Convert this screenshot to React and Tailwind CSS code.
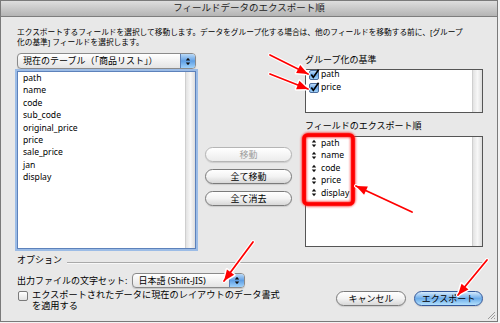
import React from 'react';

const LEFT_FIELDS = ['path', 'name', 'code', 'sub_code', 'original_price', 'price', 'sale_price', 'jan', 'display'];
const GROUP_FIELDS = ['path', 'price'];
const EXPORT_FIELDS = ['path', 'name', 'code', 'price', 'display'];

// 注釈の矢印（尾 → 先端）
const ARROWS = [
  [270, 55, 308, 74],
  [270, 74, 308, 89],
  [412, 212, 356, 186],
  [253, 242, 224, 281],
  [487, 260, 458, 295],
];

function headPoints(x1, y1, x2, y2, len = 11, half = 4.5) {
  const dx = x2 - x1;
  const dy = y2 - y1;
  const d = Math.hypot(dx, dy);
  const ux = dx / d;
  const uy = dy / d;
  const bx = x2 - ux * len;
  const by = y2 - uy * len;
  return `${x2},${y2} ${bx - uy * half},${by + ux * half} ${bx + uy * half},${by - ux * half}`;
}

function Updown({ className }) {
  return (
    <svg width="6" height="9" viewBox="0 0 6 9" className={className}>
      <polygon points="0.8,3.5 3,0.8 5.2,3.5" fill="#111" />
      <polygon points="0.8,5.5 3,8.2 5.2,5.5" fill="#111" />
    </svg>
  );
}

function Popup({ label, className }) {
  return (
    <div
      className={
        'flex items-stretch rounded-[4px] border border-[#8a8a8a] bg-gradient-to-b from-white to-[#e4e4e4] shadow-[0_1px_1px_rgba(0,0,0,0.15)] overflow-hidden ' +
        className
      }
    >
      <div className="flex-1 flex items-center pl-[5px] text-[9px] whitespace-nowrap">{label}</div>
      <div className="w-[15px] flex items-center justify-center border-l border-[#5b7fb5] bg-gradient-to-b from-[#b9d9f7] via-[#5f9fe4] to-[#9fd2fb]">
        <Updown />
      </div>
    </div>
  );
}

function ScrollTrack() {
  return <div className="w-[10px] border-l border-[#cfcfcf] bg-gradient-to-r from-[#e2e2e2] via-[#f7f7f7] to-[#dedede]" />;
}

function Checked() {
  return (
    <svg width="11" height="11" viewBox="0 0 11 11" className="shrink-0">
      <defs>
        <linearGradient id="cb" x1="0" y1="0" x2="0" y2="1">
          <stop offset="0" stopColor="#c7e2fb" />
          <stop offset="0.5" stopColor="#6aa8ea" />
          <stop offset="1" stopColor="#a9d7fb" />
        </linearGradient>
      </defs>
      <rect x="0.5" y="1.5" width="9" height="9" rx="1.5" fill="url(#cb)" stroke="#4d6f9e" />
      <path d="M2.3 5.6 L4.3 8.4 L9.6 0.8" fill="none" stroke="#000" strokeWidth="1.7" />
    </svg>
  );
}

function Pill({ children, disabled, primary, className }) {
  return (
    <div
      className={
        'h-[15px] rounded-full border flex items-center justify-center text-[9px] shadow-[0_1px_1px_rgba(0,0,0,0.12)] ' +
        (primary
          ? 'border-[#34589a] bg-gradient-to-b from-[#d6ebfc] via-[#6cace9] to-[#b3e0fc] '
          : disabled
          ? 'border-[#b5b5b5] text-[#9c9c9c] bg-gradient-to-b from-white to-[#ececec] '
          : 'border-[#7b7b7b] bg-gradient-to-b from-white via-[#f3f3f3] to-[#d8d8d8] ') +
        className
      }
    >
      {children}
    </div>
  );
}

export default function App() {
  return (
    <div className="relative w-[500px] h-[323px] bg-[#f3f3f3] text-black font-['Noto_Sans','Noto_Sans_CJK_JP',sans-serif]">
      <div className="w-[498px] h-[322px] border border-[#7a7a7a] bg-[#e8e8e8] flex flex-col">
        {/* タイトルバー */}
        <div className="h-[16px] shrink-0 border-b border-[#7d7d7d] bg-gradient-to-b from-[#dedede] to-[#b4b4b4] flex items-center justify-center text-[9.5px] text-[#1e1e1e]">
          フィールドデータのエクスポート順
        </div>

        <div className="flex-1 flex flex-col pl-[16px] pr-[14px]">
          <p className="mt-[11px] text-[7.7px] leading-[9.5px] whitespace-nowrap">
            エクスポートするフィールドを選択して移動します。データをグループ化する場合は、他のフィールドを移動する前に、[グループ
            <br />
            化の基準] フィールドを選択します。
          </p>

          <div className="mt-[6px] flex">
            {/* 左：テーブルのフィールド */}
            <div className="w-[179px] flex flex-col">
              <Popup label="現在のテーブル（「商品リスト」）" className="h-[16px]" />
              <div className="mt-[2px] h-[178px] flex border border-[#5d82bb] ring-[2px] ring-[#9cbce6] bg-white">
                <ul className="flex-1 pl-[5px] text-[8.6px] leading-[12.4px]">
                  {LEFT_FIELDS.map((f) => (
                    <li key={f}>{f}</li>
                  ))}
                </ul>
                <ScrollTrack />
              </div>
            </div>

            {/* 中央：ボタン */}
            <div className="ml-[9px] w-[87px] pt-[94px] flex flex-col gap-[7px]">
              <Pill disabled>移動</Pill>
              <Pill>全て移動</Pill>
              <Pill>全て消去</Pill>
            </div>

            {/* 右：グループ化・エクスポート順 */}
            <div className="ml-[13px] w-[178px] flex flex-col">
              <div className="h-[16px] text-[9px] leading-[14px]">グループ化の基準</div>
              <div className="h-[44px] flex border border-[#555] bg-white">
                <ul className="flex-1 -mt-[2px] pl-[3px] text-[8.6px] leading-[13px]">
                  {GROUP_FIELDS.map((f) => (
                    <li key={f} className="flex items-center gap-[1px]">
                      <Checked />
                      {f}
                    </li>
                  ))}
                </ul>
                <ScrollTrack />
              </div>
              <div className="h-[23px] pt-[6px] text-[9px] leading-[14px]">フィールドのエクスポート順</div>
              <div className="h-[111px] flex border border-[#555] bg-white">
                <ul className="flex-1 pl-[5px] text-[8.6px] leading-[12.4px]">
                  {EXPORT_FIELDS.map((f) => (
                    <li key={f} className="flex items-center gap-[4px]">
                      <Updown />
                      {f}
                    </li>
                  ))}
                </ul>
                <ScrollTrack />
              </div>
            </div>
          </div>

          {/* オプション */}
          <div className="mt-[4px] flex items-start">
            <span className="text-[9px] leading-[14px]">オプション</span>
            <div className="ml-[5px] mt-[9px] flex-1 border-t border-[#a9a9a9] border-b border-b-[#f8f8f8]" />
          </div>
          <div className="mt-[6px] flex items-center gap-[5px]">
            <span className="text-[9px] leading-[15px] whitespace-nowrap">出力ファイルの文字セット:</span>
            <Popup label="日本語 (Shift-JIS)" className="w-[113px] h-[15px]" />
          </div>
          <div className="mt-[1px] flex items-start">
            <div className="mt-[2px] ml-[1px] w-[10px] h-[10px] rounded-[2px] border border-[#7a7a7a] bg-gradient-to-b from-white to-[#e2e2e2]" />
            <div className="ml-[4px] flex flex-col text-[9.2px] leading-[11px] whitespace-nowrap">
              <span className="h-[11px]">エクスポートされたデータに現在のレイアウトのデータ書式</span>
              <span className="h-[11px]">を適用する</span>
            </div>
            <div className="ml-auto mt-[2px] flex gap-[8px]">
              <Pill className="w-[70px]">キャンセル</Pill>
              <Pill primary className="w-[69px]">エクスポート</Pill>
            </div>
          </div>
        </div>
      </div>

      {/* サイズ変更グリップ */}
      <svg className="absolute left-[486px] top-[310px]" width="10" height="10" viewBox="0 0 10 10">
        <path d="M9 2 L2 9 M9 5 L5 9 M9 8 L8 9" stroke="#9a9a9a" strokeWidth="1" />
      </svg>

      {/* 注釈 */}
      <svg className="absolute inset-0 pointer-events-none" width="500" height="323" viewBox="0 0 500 323">
        <defs>
          <filter id="glow" x="-20%" y="-20%" width="140%" height="140%">
            <feGaussianBlur stdDeviation="1.2" />
          </filter>
        </defs>
        <rect x="304" y="135" width="49" height="69" rx="4" fill="none" stroke="#ff3030" strokeWidth="5" filter="url(#glow)" />
        <rect x="304" y="135" width="49" height="69" rx="3.5" fill="none" stroke="#ff0000" strokeWidth="3.6" />
        {ARROWS.map(([x1, y1, x2, y2], i) => (
          <g key={i}>
            <line x1={x1} y1={y1} x2={x2} y2={y2} stroke="#fff" strokeWidth="4" strokeLinecap="round" />
            <polygon points={headPoints(x1, y1, x2, y2)} fill="#fff" stroke="#fff" strokeWidth="3" strokeLinejoin="round" />
            <line x1={x1} y1={y1} x2={x2} y2={y2} stroke="#ff0000" strokeWidth="1.8" strokeLinecap="round" />
            <polygon points={headPoints(x1, y1, x2, y2)} fill="#ff0000" />
          </g>
        ))}
      </svg>
    </div>
  );
}
